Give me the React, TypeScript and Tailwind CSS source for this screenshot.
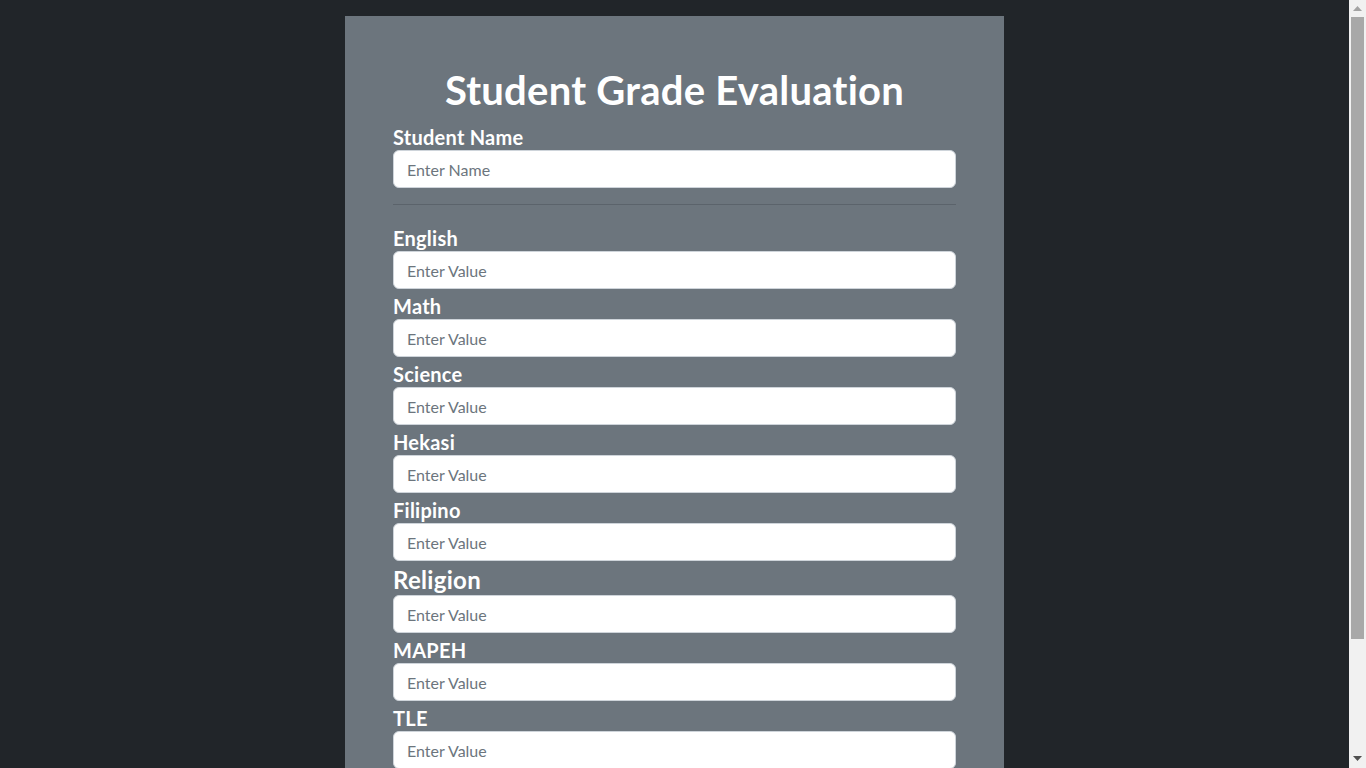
import React from "react";

const subjects = ["English", "Math", "Science", "Hekasi", "Filipino", "Religion", "MAPEH", "TLE"];

const inputCls =
  "h-[38px] w-full rounded-[6px] border border-[#ced4da] bg-white px-[13px] text-[16px] text-[#212529] placeholder:text-[#6c757d] outline-none";

function Field({ label, big }: { label: string; big?: boolean }) {
  return (
    <div className="flex flex-col">
      <label
        className={
          big
            ? "h-[34px] pt-[1px] text-[24px] leading-[36px] font-bold tracking-[0.3px] text-white"
            : "h-[30px] pt-[2px] text-[20px] leading-[30px] font-bold tracking-[0.25px] text-white"
        }
      >
        {label}
      </label>
      <input type="text" placeholder="Enter Value" className={inputCls} />
    </div>
  );
}

function FakeScrollbar() {
  return (
    <div className="relative h-screen w-[17px] shrink-0 bg-[#f1f1f1]">
      <svg className="absolute left-[4px] top-[6px]" width="9" height="5" viewBox="0 0 9 5">
        <polygon points="4.5,0 9,5 0,5" fill="#a3a3a3" />
      </svg>
      <div className="absolute left-[2px] top-[17px] h-[622px] w-[13px] bg-[#a8a8a8]" />
      <svg className="absolute left-[4px] top-[756px]" width="9" height="5" viewBox="0 0 9 5">
        <polygon points="0,0 9,0 4.5,5" fill="#505050" />
      </svg>
    </div>
  );
}

export default function App() {
  return (
    <div
      className="flex h-screen overflow-hidden bg-[#212529]"
      style={{ fontFamily: "Lato, 'Noto Sans', sans-serif" }}
    >
      <div className="h-screen flex-1 overflow-hidden">
        <div className="py-4">
          <div className="mx-auto w-[659px] bg-[#6c757d] px-12 pt-12 pb-12">
            <h1 className="mb-2 h-[48px] pt-[2px] text-center text-[40px] leading-[48px] font-bold tracking-[0.25px] text-white">
              Student Grade Evaluation
            </h1>
            <div className="flex flex-col">
              <label className="h-[30px] pt-[2px] text-[20px] leading-[30px] font-bold tracking-[0.25px] text-white">
                Student Name
              </label>
              <input type="text" placeholder="Enter Name" className={inputCls} />
            </div>
            <hr className="my-4 border-t border-[#5b636b]" />
            <div className="flex flex-col">
              {subjects.map((s) => (
                <Field key={s} label={s} big={s === "Religion"} />
              ))}
            </div>
            <hr className="my-4 border-t border-[#5b636b]" />
            <div className="flex flex-col gap-3">
              <button className="h-[38px] w-full rounded-[6px] bg-[#0d6efd] text-[16px] text-white">
                Calculate
              </button>
              <div className="flex flex-col">
                <label className="h-[30px] text-[20px] leading-[30px] font-bold text-white">Average</label>
                <input
                  type="text"
                  readOnly
                  placeholder="Average"
                  className="h-[38px] w-full rounded-[6px] border border-[#ced4da] bg-[#e9ecef] px-[13px] text-[16px] placeholder:text-[#6c757d] outline-none"
                />
              </div>
              <div className="flex flex-col">
                <label className="h-[30px] text-[20px] leading-[30px] font-bold text-white">Remarks</label>
                <input
                  type="text"
                  readOnly
                  placeholder="Remarks"
                  className="h-[38px] w-full rounded-[6px] border border-[#ced4da] bg-[#e9ecef] px-[13px] text-[16px] placeholder:text-[#6c757d] outline-none"
                />
              </div>
            </div>
          </div>
        </div>
      </div>
      <FakeScrollbar />
    </div>
  );
}
